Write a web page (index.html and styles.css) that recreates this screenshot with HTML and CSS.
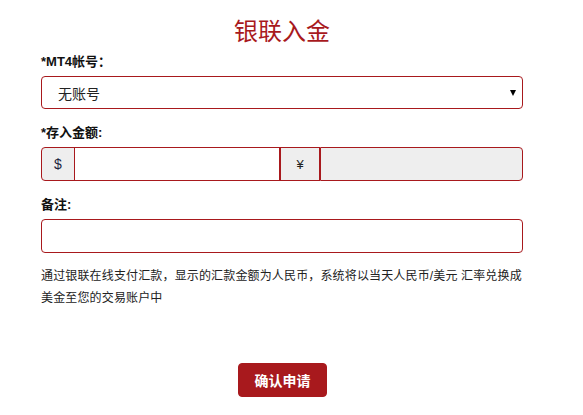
FILE: index.html
```html
<!DOCTYPE html>
<html lang="zh">
<head>
<meta charset="utf-8">
<title>银联入金</title>
<link rel="stylesheet" href="styles.css">
</head>
<body>
<form class="page">
  <h1 class="title">银联入金</h1>

  <label class="label">*MT4帐号：</label>
  <div class="select">
    <span class="select-text">无账号</span>
    <span class="caret"></span>
  </div>

  <label class="label">*存入金额:</label>
  <div class="group">
    <span class="addon addon-first">$</span>
    <input class="amount" type="text">
    <span class="addon addon-yen">¥</span>
    <span class="readonly"></span>
  </div>

  <label class="label">备注:</label>
  <div class="note"></div>

  <p class="info">通过银联在线支付汇款，显示的汇款金额为人民币，系统将以当天人民币/美元 汇率兑换成美金至您的交易账户中</p>

  <div class="actions">
    <button class="submit" type="button">确认申请</button>
  </div>
</form>
</body>
</html>
```

FILE: styles.css
```css
* { box-sizing: border-box; }
html, body { margin: 0; padding: 0; background: #fff; }
body {
  font-family: "Liberation Sans", "Noto Sans CJK SC", sans-serif;
  color: #222;
}
.page {
  display: flex;
  flex-direction: column;
  padding: 0 60px 0 41px;
  width: 583px;
}
.title {
  margin: 17px 0 0;
  text-align: center;
  font-size: 24px;
  font-weight: normal;
  line-height: 30px;
  color: #a8191d;
}
.label {
  display: block;
  font-size: 13px;
  font-weight: bold;
  line-height: 16px;
  color: #111;
  margin: 8px 0 6px;
}
.title + .label { margin-top: 7px; }
.select {
  height: 33px;
  border: 1px solid #a8191d;
  border-radius: 4px;
  display: flex;
  align-items: center;
  justify-content: space-between;
  padding: 0 6px 0 16px;
  margin-bottom: 8px;
}
.select-text { font-size: 14px; color: #222; }
.caret {
  width: 0; height: 0;
  border-left: 3.5px solid transparent;
  border-right: 3.5px solid transparent;
  border-top: 6px solid #000;
}
.group {
  display: flex;
  height: 34px;
  margin-bottom: 8px;
}
.addon {
  display: flex;
  align-items: center;
  justify-content: center;
  background: #eee;
  border: 1px solid #a8191d;
  font-size: 13px;
  color: #222;
}
.addon-first {
  width: 34px;
  border-radius: 4px 0 0 4px;
  font-size: 14px;
  color: #1c2440;
}
.amount {
  width: 206px;
  margin: 0 0 0 -1px;
  border: 1px solid #a8191d;
  background: #fff;
  padding: 0 8px;
  outline: none;
  font: inherit;
}
.addon-yen { width: 40px; }
.readonly {
  flex: 1;
  background: #eee;
  border: 1px solid #a8191d;
  border-radius: 0 4px 4px 0;
}
.note {
  height: 34px;
  border: 1px solid #a8191d;
  border-radius: 4px;
}
.info {
  margin: 12px 0 0;
  font-size: 12px;
  letter-spacing: 0.15px;
  line-height: 22px;
  color: #222;
}
.actions {
  display: flex;
  justify-content: center;
  margin-top: 54px;
}
.submit {
  width: 89px;
  height: 34px;
  border: 1px solid #a8191d;
  border-radius: 4px;
  background: #a8191d;
  color: #fff;
  font-family: "Liberation Sans", "Noto Sans CJK SC", sans-serif;
  font-size: 14px;
  font-weight: bold;
  padding: 0;
  margin-left: 1px;
}
```
